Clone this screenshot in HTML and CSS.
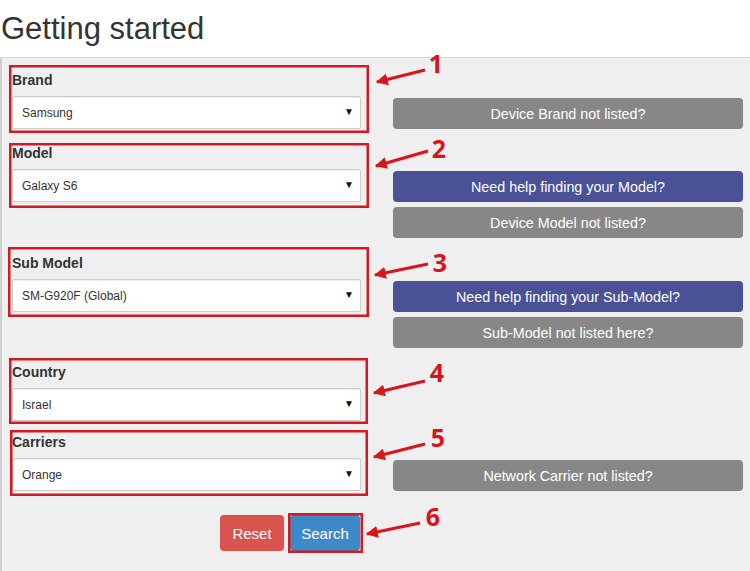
FILE: index.html
```html
<!DOCTYPE html>
<html>
<head>
<meta charset="utf-8">
<link rel="stylesheet" href="styles.css">
</head>
<body>
<h1 class="title">Getting started</h1>
<div class="panel">
  <div class="rows">
    <div class="row">
      <div class="field">
        <label class="field-label">Brand</label>
        <div class="select-wrap"><select class="select"><option>Samsung</option></select><span class="caret">▼</span></div>
      </div>
      <div class="actions">
        <button class="btn btn-gray">Device Brand not listed?</button>
      </div>
    </div>
    <div class="row">
      <div class="field">
        <label class="field-label">Model</label>
        <div class="select-wrap"><select class="select"><option>Galaxy S6</option></select><span class="caret">▼</span></div>
      </div>
      <div class="actions">
        <button class="btn btn-indigo">Need help finding your Model?</button>
        <button class="btn btn-gray">Device Model not listed?</button>
      </div>
    </div>
    <div class="row row-sub">
      <div class="field">
        <label class="field-label">Sub Model</label>
        <div class="select-wrap"><select class="select"><option>SM-G920F (Global)</option></select><span class="caret">▼</span></div>
      </div>
      <div class="actions">
        <button class="btn btn-indigo">Need help finding your Sub-Model?</button>
        <button class="btn btn-gray">Sub-Model not listed here?</button>
      </div>
    </div>
    <div class="row">
      <div class="field">
        <label class="field-label">Country</label>
        <div class="select-wrap"><select class="select"><option>Israel</option></select><span class="caret">▼</span></div>
      </div>
      <div class="actions"></div>
    </div>
    <div class="row row-carrier">
      <div class="field">
        <label class="field-label">Carriers</label>
        <div class="select-wrap"><select class="select"><option>Orange</option></select><span class="caret">▼</span></div>
      </div>
      <div class="actions">
        <button class="btn btn-gray">Network Carrier not listed?</button>
      </div>
    </div>
  </div>
  <div class="form-buttons">
    <button class="btn-form btn-reset">Reset</button>
    <button class="btn-form btn-search">Search</button>
  </div>
</div>

<svg class="annotations" width="750" height="571" viewBox="0 0 750 571">
  <defs>
    <marker id="head" viewBox="0 0 10 10" refX="9" refY="5" markerWidth="4" markerHeight="4" orient="auto-start-reverse" markerUnits="strokeWidth">
      <path d="M0 0 L10 5 L0 10 Z" fill="#d9141b"/>
    </marker>
  </defs>
  <g fill="none" stroke="#d11a21" stroke-width="2.5">
    <rect x="10.25" y="66.25" width="357.5" height="65.5"/>
    <rect x="10.25" y="144.25" width="357.5" height="62.5"/>
    <rect x="9.25" y="248.25" width="358.5" height="67.5"/>
    <rect x="10.25" y="359.25" width="356.5" height="63.5"/>
    <rect x="11.25" y="431.25" width="355.5" height="63.5"/>
    <rect x="289.25" y="514.25" width="72.5" height="37.5"/>
  </g>
  <g stroke="#d9141b" stroke-width="3" marker-end="url(#head)">
    <line x1="425" y1="70" x2="377" y2="82"/>
    <line x1="428" y1="151" x2="376" y2="166"/>
    <line x1="428" y1="264" x2="375" y2="275"/>
    <line x1="425" y1="381" x2="374" y2="393"/>
    <line x1="425" y1="444" x2="374" y2="457"/>
    <line x1="420" y1="523" x2="367" y2="534"/>
  </g>
  <g class="num" fill="#d9141b" text-anchor="middle">
    <text x="436" y="73">1</text>
    <text x="439" y="158">2</text>
    <text x="440" y="272">3</text>
    <text x="437" y="382">4</text>
    <text x="438" y="447">5</text>
    <text x="433" y="526">6</text>
  </g>
</svg>
</body>
</html>
```
FILE: styles.css
```css
html, body {
  margin: 0;
  padding: 0;
  background: #ffffff;
  font-family: "Liberation Sans", Arial, sans-serif;
  width: 750px;
  height: 571px;
  overflow: hidden;
  position: relative;
}

.title {
  margin: 11px 0 11px 1px;
  font-size: 31px;
  line-height: 35px;
  font-weight: normal;
  color: #333333;
}

.panel {
  background: #efefef;
  border-top: 1px solid #d6d6d6;
  border-left: 2px solid #d0d0d0;
  padding: 12px 7px 0 10px;
  height: 514px;
  box-sizing: border-box;
}

.rows {
  display: flex;
  flex-direction: column;
  gap: 14px;
}

.row {
  display: grid;
  grid-template-columns: 349px 350px;
  column-gap: 32px;
  align-items: start;
}

.row-sub {
  margin-top: 1px;
}

.row-carrier {
  margin-top: -3px;
}

.field {
  display: flex;
  flex-direction: column;
}

.field-label {
  font-size: 14px;
  line-height: 20px;
  font-weight: bold;
  color: #333333;
  margin-bottom: 6px;
}

.select-wrap {
  position: relative;
}

.select {
  appearance: none;
  -webkit-appearance: none;
  display: block;
  width: 100%;
  height: 33px;
  box-sizing: border-box;
  border: 1px solid #cccccc;
  border-radius: 2px;
  background: #ffffff;
  box-shadow: inset 0 1px 1px rgba(0, 0, 0, 0.075);
  padding: 0 24px 0 9px;
  font-family: "Liberation Sans", Arial, sans-serif;
  font-size: 12px;
  color: #333333;
}

.caret {
  position: absolute;
  right: 7px;
  top: 11px;
  font-size: 10px;
  line-height: 10px;
  color: #111111;
}

.actions {
  padding-top: 28px;
  display: flex;
  flex-direction: column;
  gap: 5px;
}

.btn {
  height: 31px;
  border: none;
  border-radius: 4px;
  color: #ffffff;
  font-family: "Liberation Sans", Arial, sans-serif;
  font-size: 14.3px;
  padding: 0;
  text-align: center;
}

.btn-gray {
  background: #878787;
}

.btn-indigo {
  background: #4a5196;
}

.form-buttons {
  width: 348px;
  display: flex;
  justify-content: flex-end;
  gap: 6px;
  margin-top: 24px;
}

.btn-form {
  height: 36px;
  border: none;
  border-radius: 4px;
  color: #ffffff;
  font-family: "Liberation Sans", Arial, sans-serif;
  font-size: 15px;
  padding: 0;
}

.btn-reset {
  width: 64px;
  background: #d9534f;
}

.btn-search {
  width: 70px;
  background: #3d89c9;
}

.annotations {
  position: absolute;
  left: 0;
  top: 0;
  pointer-events: none;
}

.num text {
  font-family: "Open Sans", "Liberation Sans", sans-serif;
  font-weight: bold;
  font-size: 25px;
}
```
